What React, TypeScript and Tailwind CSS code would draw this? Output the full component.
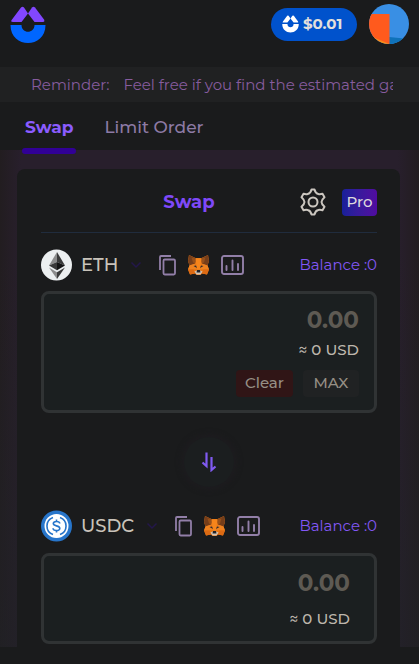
import { useState } from "react";

const tokens = [
  { symbol: "ETH", Icon: EthIcon },
  { symbol: "USDC", Icon: UsdcIcon },
];

function Logo({ className, top, bottom }: { className: string; top: string; bottom: string }) {
  return (
    <svg viewBox="0 0 36 38" className={className} aria-hidden="true">
      <path d="M11 1.500Q12.500 0 14 1.500L18 7.500L11.500 16H3Q0 16 2 13.500Z" fill={top} />
      <path d="M22 1.500Q23.500 0 25 1.500L34 13.500Q35 16 33 16H24.500L18 7.500Z" fill={top} />
      <path d="M0.500 19H11.500C11.500 28 24.500 28 24.500 19H35.500C35.500 43 0.500 43 0.500 19Z" fill={bottom} />
    </svg>
  );
}

function EthIcon() {
  return (
    <svg viewBox="0 0 32 32" className="size-8" aria-hidden="true">
      <circle cx="15.500" cy="16" r="15.500" fill="#eceff0" />
      <path d="M16 3L8 16.500L16 13Z" fill="#8c8c8c" />
      <path d="M16 3L24 16.500L16 13Z" fill="#3a3a3a" />
      <path d="M16 13L8 16.500L16 21.300Z" fill="#393939" />
      <path d="M16 13L24 16.500L16 21.300Z" fill="#141414" />
      <path d="M8 18.500L16 23.200V30Z" fill="#8c8c8c" />
      <path d="M24 18.500L16 23.200V30Z" fill="#3a3a3a" />
    </svg>
  );
}

function UsdcIcon() {
  return (
    <svg viewBox="0 0 32 32" className="size-8" fill="none" aria-hidden="true">
      <circle cx="15.500" cy="16" r="15.500" fill="#2775ca" />
      <circle cx="15.500" cy="16" r="12" fill="#fff" />
      <g stroke="#2775ca" strokeWidth="1.600">
        <path d="M12 7.500A9 9 0 0 0 12 24.500M19 7.500A9 9 0 0 1 19 24.500" />
        <path d="M18.800 13.500C18.500 10.800 12.300 10.700 12.300 13.500C12.300 16.700 18.800 15 18.800 18.500C18.800 21.400 12.200 21.300 12 18.300M15.500 9.500V11.500M15.500 20.500V22.500" />
      </g>
    </svg>
  );
}

function FoxIcon() {
  return (
    <svg viewBox="0 0 42 40" className="h-5 w-[21px]" aria-hidden="true">
      <path d="M2 0L15 6H27L40 0L42 12L39 21L42 29L38 39L28 37L25 40H17L14 37L4 39L0 29L3 21L0 12Z" fill="#e87817" />
      <path d="M2 0L16 7L14 17L3 21L0 12Z M40 0L26 7L28 17L39 21L42 12Z" fill="#763e1a" />
      <path d="M7 5L16 7L14 17L10 15Z M35 5L26 7L28 17L32 15Z" fill="#97501a" />
      <path d="M15 7H27L24 29H18Z" fill="#f6851b" />
      <path d="M3 21L13 18L17 28L11 28L0 29Z M39 21L29 18L25 28L31 28L42 29Z" fill="#ee8220" />
      <path d="M11 22L16 21L18 26Z M31 22L26 21L24 26Z" fill="#2b2b32" />
      <path d="M0 29H11L14 37L4 39Z M42 29H31L28 37L38 39Z" fill="#dc6a13" />
      <path d="M13 33L18 31H24L29 33L25 39H17Z" fill="#d2c5b8" />
      <path d="M18 30H24L25 35H17Z" fill="#20242b" />
    </svg>
  );
}

function CopyIcon() {
  return (
    <svg viewBox="0 0 17 21" className="h-[21px] w-[17px]" fill="none" stroke="#927fa8" strokeWidth="1.800" aria-hidden="true">
      <path d="M1 15V2Q1 1 2 1H12" />
      <rect x="4.500" y="4.500" width="11.500" height="15" rx="1.200" />
    </svg>
  );
}

function ChartIcon() {
  return (
    <svg viewBox="0 0 23 20" className="h-5 w-[23px]" fill="none" stroke="#927fa8" strokeWidth="1.900" strokeLinecap="round" aria-hidden="true">
      <rect x="1" y="1" width="21" height="18" rx="2" />
      <path d="M5.500 11V15M11.500 5.500V15M17 9V15" />
    </svg>
  );
}

function GearIcon() {
  return (
    <svg viewBox="0 0 26 28" className="h-7 w-[26px]" fill="none" stroke="#cbc6bf" strokeWidth="2" strokeLinejoin="round" aria-hidden="true">
      <path d="M11.500 1.500H14.500Q15.500 5.500 18.300 6Q20 6.500 22.500 5.800L24.500 9.300Q21.500 12 21.500 14Q21.500 16 24.500 18.700L22.500 22.200Q20 21.500 18.300 22Q15.500 22.500 14.500 26.500H11.500Q10.500 22.500 7.700 22Q6 21.500 3.500 22.200L1.500 18.700Q4.500 16 4.500 14Q4.500 12 1.500 9.300L3.500 5.800Q6 6.500 7.700 6Q10.500 5.500 11.500 1.500Z" />
      <circle cx="13" cy="14" r="4.500" />
    </svg>
  );
}

function TokenRow({ index }: { index: number }) {
  const { symbol, Icon } = tokens[index];
  return (
    <div className="flex h-8 items-center">
      <button type="button" className="flex items-center">
        <Icon />
        <span className="ml-2 text-lg font-medium text-[#c9c3ba]">{symbol}</span>
        <svg viewBox="0 0 12 8" className="ml-3 h-2 w-3" fill="none" stroke="#23174a" strokeWidth="1.500" aria-hidden="true">
          <path d="M1.500 1.500L6 6L10.500 1.500" />
        </svg>
      </button>
      <div className="ml-[17px] flex items-center gap-3">
        <button type="button" aria-label="Copy address"><CopyIcon /></button>
        <button type="button" aria-label="Add to wallet"><FoxIcon /></button>
        <button type="button" aria-label="Show chart"><ChartIcon /></button>
      </div>
      <span className="ml-auto text-[15px] whitespace-nowrap text-[#8257f5]">Balance :0</span>
    </div>
  );
}

function AmountInput({ label }: { label: string }) {
  const [value, setValue] = useState("");
  return (
    <input
      aria-label={label}
      placeholder="0.00"
      value={value}
      onChange={(e) => setValue(e.target.value)}
      className="block h-8 w-full min-w-0 bg-transparent text-right text-[23px] font-bold text-[#c9c3ba] outline-none placeholder:text-[#5e5a53]"
    />
  );
}

export default function App() {
  return (
    <div className="min-h-screen bg-[#1a1b1c] font-['Montserrat','Inter',sans-serif]">
      <header className="flex h-[67px] items-start justify-between pt-1 pr-2.5 pl-2.5">
        <a href="#" aria-label="Home" className="mt-0.5">
          <Logo className="h-[38px] w-9" top="#8247ff" bottom="#0066ff" />
        </a>
        <div className="flex items-center gap-3">
          <button type="button" className="flex h-[33px] w-[86px] items-center gap-1 rounded-full bg-[#0052cc] pl-[11px] text-[15px] font-bold text-[#e3e0dc]">
            <Logo className="h-[18px] w-[17px]" top="#fff" bottom="#fff" />
            $0.01
          </button>
          <button type="button" aria-label="Account">
            <svg viewBox="0 0 40 40" className="size-10" aria-hidden="true">
              <clipPath id="avatar"><circle cx="20" cy="20" r="20" /></clipPath>
              <g clipPath="url(#avatar)">
                <path fill="#398fe4" d="M0 0H40V40H0Z" />
                <path fill="#0f72b9" d="M20 33L40 35V40H20Z" />
                <path fill="#f98b18" d="M0 30L20 39V40H0Z" />
                <path fill="#ff5a1d" d="M0 10H20.500V40L6 34L0 31Z" />
              </g>
            </svg>
          </button>
        </div>
      </header>

      <div className="h-[35px] bg-[#202122] pr-[26px] pl-[31px]">
        <div className="flex h-full items-center gap-3.5 overflow-hidden pt-0.5 text-[15px] whitespace-nowrap text-[#875c9e]">
          <span>Reminder:</span>
          <span>Feel free if you find the estimated gas</span>
        </div>
      </div>

      <nav className="flex h-12 gap-6 pl-[22px] text-[17px]">
        <a href="#" className="relative flex items-center px-[3px] pt-1 font-bold text-[#8b5cff]">
          Swap
          <span className="absolute inset-x-0 -bottom-1 h-1.5 rounded-sm bg-[#310096]" />
        </a>
        <a href="#" className="flex items-center px-1 pt-1 font-medium text-[#8d7aa5]">Limit Order</a>
      </nav>

      <main className="bg-[linear-gradient(to_bottom,transparent_20%,#20222699_100%),linear-gradient(to_right,#221d20,#281f2c_5%,#281f2c_95%,#221d20)] pt-[19px] pr-[19px] pl-[17px]">
        <section className="rounded-t-lg bg-[#1a1b1c] pt-4 pr-[23px] pb-[3px] pl-6">
          <div className="flex h-12 items-center border-b border-[#202c3d] pb-[13px]">
            <div className="flex-1" />
            <h1 className="mr-10 text-lg font-bold text-[#7f49f8]">Swap</h1>
            <div className="-ml-10 flex flex-1 items-center justify-end gap-4 pl-10">
              <button type="button" aria-label="Settings"><GearIcon /></button>
              <button type="button" className="h-[27px] w-[35px] rounded-sm bg-linear-to-r from-[#172099] to-[#510aa0] text-[15px] font-medium text-[#ddd9de]">
                Pro
              </button>
            </div>
          </div>

          <div className="pt-4"><TokenRow index={0} /></div>
          <div className="mt-2.5 rounded-lg border-3 border-[#303334] bg-[#1b1f20] px-[15px] pt-2.5 pb-[13px]">
            <AmountInput label="Amount to pay" />
            <p className="mt-0.5 text-right text-[15px] leading-6 font-medium text-[#bdb6ac]">≈ 0 USD</p>
            <div className="mt-2 flex justify-end gap-2.5 text-[15px] font-medium text-[#968f85]">
              <button type="button" className="h-[27px] w-[57px] rounded-sm bg-[#301516]">Clear</button>
              <button type="button" className="h-[27px] w-14 rounded-sm bg-[#202223]">MAX</button>
            </div>
          </div>

          <div className="flex h-[97px] items-center justify-center">
            <button type="button" aria-label="Switch tokens" className="flex size-[50px] items-center justify-center rounded-full bg-[#1b1e1f] shadow-[0_0_6px_2px_#1e1c20]">
              <svg viewBox="0 0 16 20" className="h-5 w-4" fill="none" stroke="#805af0" strokeWidth="2.200" aria-hidden="true">
                <path d="M5.500 0.500V14L1.500 10.500M10.500 5V18L14.500 14.500" />
              </svg>
            </button>
          </div>

          <TokenRow index={1} />
          <div className="mt-[11px] rounded-lg border-3 border-[#303334] bg-[#1b1f20] px-6 pt-[11px] pb-2.5">
            <AmountInput label="Amount to receive" />
            <p className="mt-2 text-right text-[15px] leading-6 font-medium text-[#bdb6ac]">≈ 0 USD</p>
          </div>
        </section>
      </main>
      <footer className="h-[18px]" />
    </div>
  );
}
